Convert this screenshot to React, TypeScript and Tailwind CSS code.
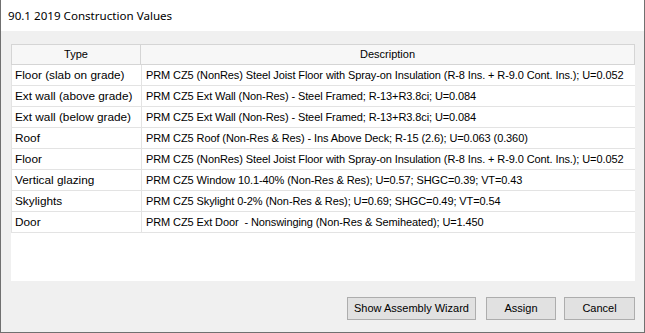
import React from "react";

const rows: [string, string][] = [
  ["Floor (slab on grade)", "PRM CZ5 (NonRes) Steel Joist Floor with Spray-on Insulation (R-8 Ins. + R-9.0 Cont. Ins.); U=0.052"],
  ["Ext wall (above grade)", "PRM CZ5 Ext Wall (Non-Res) - Steel Framed; R-13+R3.8ci; U=0.084"],
  ["Ext wall (below grade)", "PRM CZ5 Ext Wall (Non-Res) - Steel Framed; R-13+R3.8ci; U=0.084"],
  ["Roof", "PRM CZ5 Roof (Non-Res & Res) - Ins Above Deck; R-15 (2.6); U=0.063 (0.360)"],
  ["Floor", "PRM CZ5 (NonRes) Steel Joist Floor with Spray-on Insulation (R-8 Ins. + R-9.0 Cont. Ins.); U=0.052"],
  ["Vertical glazing", "PRM CZ5 Window 10.1-40% (Non-Res & Res); U=0.57; SHGC=0.39; VT=0.43"],
  ["Skylights", "PRM CZ5 Skylight 0-2% (Non-Res & Res); U=0.69; SHGC=0.49; VT=0.54"],
  ["Door", "PRM CZ5 Ext Door  - Nonswinging (Non-Res & Semiheated); U=1.450"],
];

function DialogButton({ label, className }: { label: string; className: string }) {
  return (
    <button
      className={`h-[23px] shrink-0 whitespace-nowrap border border-[#adadad] bg-[#e1e1e1] text-[11px] text-black ${className}`}
    >
      {label}
    </button>
  );
}

export default function App() {
  return (
    <div
      className="flex h-[333px] w-[645px] flex-col border-x border-b border-[#707070] bg-[#f0f0f0] text-black"
      style={{ fontFamily: "Tahoma, 'Liberation Sans', sans-serif" }}
    >
      <div
        className="flex h-[31px] items-center bg-white pl-[7px] text-[11.6px]"
        style={{ fontFamily: "'Segoe UI', 'Noto Sans', sans-serif" }}
      >
        90.1 2019 Construction Values
      </div>

      <div className="flex flex-1 flex-col pl-[10px] pr-[9px] pt-[13px]">
        <div className="h-[237px] overflow-hidden bg-white">
          <div className="flex h-[21px] border border-[#d5d5d5] bg-[#f7f7f7] text-[11px]">
            <div className="flex w-[129px] shrink-0 items-center justify-center border-r border-[#d5d5d5]">Type</div>
            <div className="flex flex-1 items-center justify-center">Description</div>
          </div>
          {rows.map(([type, desc], i) => (
            <div key={i} className="flex h-[21px] border-b border-l border-[#e3e3e3]">
              <div className="flex w-[130px] shrink-0 items-center border-r border-[#e3e3e3] pl-[3px] pt-[2px] text-[11.8px]">
                {type}
              </div>
              <div className="flex min-w-0 flex-1 items-center whitespace-pre pl-[4px] pt-[1px] text-[11px] tracking-[-0.1px]">
                {desc}
              </div>
            </div>
          ))}
        </div>

        <div className="mt-[16px] flex justify-end">
          <DialogButton label="Show Assembly Wizard" className="w-[129px]" />
          <DialogButton label="Assign" className="ml-[10px] w-[70px]" />
          <DialogButton label="Cancel" className="ml-[8px] w-[71px]" />
        </div>
      </div>
    </div>
  );
}
